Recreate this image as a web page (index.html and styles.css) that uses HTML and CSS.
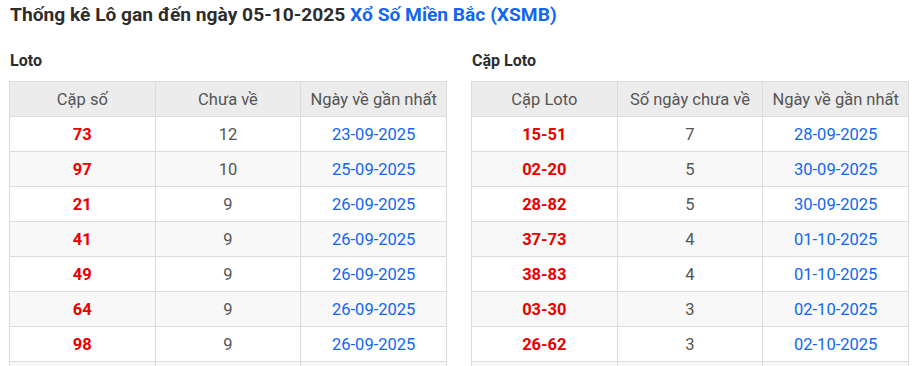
FILE: index.html
```html
<!DOCTYPE html>
<html lang="vi">
<head>
<meta charset="utf-8">
<title>Thống kê Lô gan</title>
<link rel="stylesheet" href="styles.css">
</head>
<body>
<h1 class="title">Thống kê Lô gan đến ngày 05-10-2025 <span class="title-link">Xổ Số Miền Bắc (XSMB)</span></h1>
<div class="panels">
  <section class="panel">
    <h2 class="panel-title">Loto</h2>
    <table class="stat">
      <thead><tr><th>Cặp số</th><th>Chưa về</th><th>Ngày về gần nhất</th></tr></thead>
      <tbody>
        <tr><td class="num">73</td><td class="cnt">12</td><td class="date">23-09-2025</td></tr>
        <tr><td class="num">97</td><td class="cnt">10</td><td class="date">25-09-2025</td></tr>
        <tr><td class="num">21</td><td class="cnt">9</td><td class="date">26-09-2025</td></tr>
        <tr><td class="num">41</td><td class="cnt">9</td><td class="date">26-09-2025</td></tr>
        <tr><td class="num">49</td><td class="cnt">9</td><td class="date">26-09-2025</td></tr>
        <tr><td class="num">64</td><td class="cnt">9</td><td class="date">26-09-2025</td></tr>
        <tr><td class="num">98</td><td class="cnt">9</td><td class="date">26-09-2025</td></tr>
        <tr class="tail"><td></td><td></td><td></td></tr>
      </tbody>
    </table>
  </section>
  <section class="panel">
    <h2 class="panel-title">Cặp Loto</h2>
    <table class="stat">
      <thead><tr><th>Cặp Loto</th><th>Số ngày chưa về</th><th>Ngày về gần nhất</th></tr></thead>
      <tbody>
        <tr><td class="num">15-51</td><td class="cnt">7</td><td class="date">28-09-2025</td></tr>
        <tr><td class="num">02-20</td><td class="cnt">5</td><td class="date">30-09-2025</td></tr>
        <tr><td class="num">28-82</td><td class="cnt">5</td><td class="date">30-09-2025</td></tr>
        <tr><td class="num">37-73</td><td class="cnt">4</td><td class="date">01-10-2025</td></tr>
        <tr><td class="num">38-83</td><td class="cnt">4</td><td class="date">01-10-2025</td></tr>
        <tr><td class="num">03-30</td><td class="cnt">3</td><td class="date">02-10-2025</td></tr>
        <tr><td class="num">26-62</td><td class="cnt">3</td><td class="date">02-10-2025</td></tr>
        <tr class="tail"><td></td><td></td><td></td></tr>
      </tbody>
    </table>
  </section>
</div>
</body>
</html>
```
FILE: styles.css
```css
html, body {
  margin: 0;
  padding: 0;
  background: #ffffff;
}
body {
  font-family: Roboto, "Liberation Sans", Arial, sans-serif;
  color: #333333;
  padding: 4px 6px 0 9px;
}
.title {
  margin: 0;
  font-size: 19.2px;
  line-height: 22px;
  font-weight: 700;
  color: #2d2d2d;
  padding-left: 1px;
}
.title-link {
  color: #1266f1;
}
.panels {
  display: grid;
  grid-template-columns: 438px 438px;
  column-gap: 24px;
  margin-top: 26px;
}
.panel-title {
  margin: 0 0 11px 1px;
  font-size: 16px;
  line-height: 18px;
  font-weight: 700;
  color: #2d2d2d;
}
.stat {
  width: 438px;
  border-collapse: collapse;
  table-layout: fixed;
  font-size: 16.5px;
}
.stat th, .stat td {
  border: 1px solid #dcdcdc;
  text-align: center;
  padding: 0 4px;
  height: 34px;
  white-space: nowrap;
}
.stat th {
  background: #ececec;
  color: #555555;
  font-weight: 400;
}
.stat tbody tr:nth-child(even) td {
  background: #f8f8f8;
}
.num {
  color: #ea0000;
  font-weight: 700;
}
.cnt {
  color: #555555;
}
.date {
  color: #1266f1;
}
```
